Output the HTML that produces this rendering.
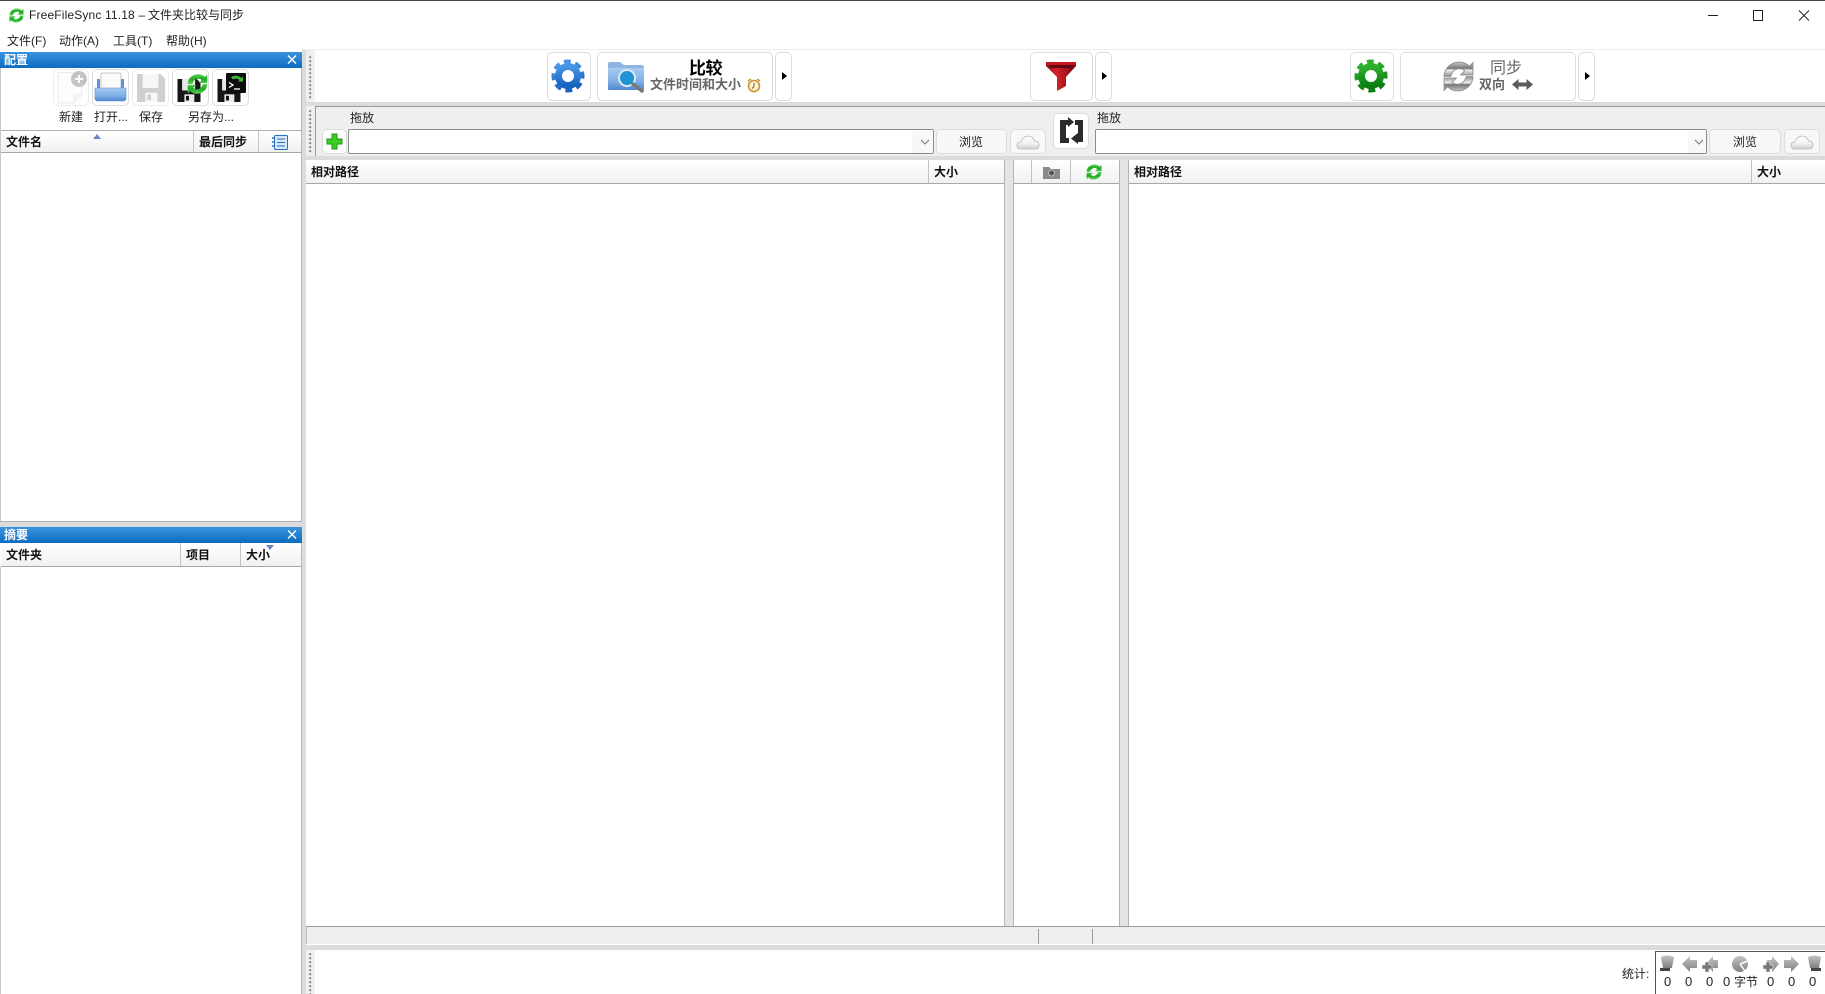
<!DOCTYPE html>
<html lang="zh"><head><meta charset="utf-8"><title>FreeFileSync 11.18</title>
<style>
html,body{margin:0;padding:0;width:1825px;height:994px;overflow:hidden;background:#fff}
body{position:relative;font:12px/16px "Liberation Sans","Noto Sans CJK SC",sans-serif;color:#222}
.a,.t,svg.i{position:absolute}
.t{white-space:nowrap;height:16px;line-height:16px}
.b{font-weight:700;color:#111}
.btn{position:absolute;box-sizing:border-box;border:1px solid #dcdcdc;border-radius:5px;background:#fff}
.cap{position:absolute;left:0;width:302px;height:16px;background:linear-gradient(#3b93de,#0b6cc0)}
.hdr{position:absolute;height:24px;box-sizing:border-box;background:linear-gradient(#fff,#f1f1f1);border-bottom:1px solid #a8a8a8}
.sep{position:absolute;width:1px;background:#c4c4c4}
.grip{position:absolute;width:3px;background-image:radial-gradient(circle at 1.2px 1.2px,#888 1px,transparent 1.2px);background-size:3px 4px}
.tri{position:absolute;width:0;height:0;border-style:solid;border-color:transparent}
</style></head><body>
<svg width="0" height="0" style="position:absolute"><defs>
<linearGradient id="gG" x1="0" y1="0" x2="0" y2="1"><stop offset="0" stop-color="#5fd35f"/><stop offset=".5" stop-color="#1ea81e"/><stop offset="1" stop-color="#5ccf5c"/></linearGradient>
<linearGradient id="gS" x1="0" y1="0" x2="0" y2="1"><stop offset="0" stop-color="#c9c9c9"/><stop offset=".45" stop-color="#757575"/><stop offset=".55" stop-color="#f0f0f0"/><stop offset="1" stop-color="#8c8c8c"/></linearGradient>
<linearGradient id="gA" x1="0" y1="0" x2="0" y2="1"><stop offset="0" stop-color="#c4c4c4"/><stop offset="1" stop-color="#808080"/></linearGradient>
<linearGradient id="gB" x1="0" y1="0" x2="0" y2="1"><stop offset="0" stop-color="#4a96e6"/><stop offset="1" stop-color="#1862c0"/></linearGradient>
<linearGradient id="gGr" x1="0" y1="0" x2="0" y2="1"><stop offset="0" stop-color="#2fb12f"/><stop offset="1" stop-color="#0b7d12"/></linearGradient>
<linearGradient id="gF" x1="0" y1="0" x2="0" y2="1"><stop offset="0" stop-color="#a7cbf3"/><stop offset=".6" stop-color="#7fb0e8"/><stop offset="1" stop-color="#4f87cf"/></linearGradient>
<linearGradient id="gR" x1="0" y1="0" x2="1" y2="0"><stop offset="0" stop-color="#8f0d14"/><stop offset=".35" stop-color="#d8222a"/><stop offset=".7" stop-color="#a5131a"/><stop offset="1" stop-color="#5f0a0e"/></linearGradient>
<linearGradient id="gC" x1="0" y1="0" x2="0" y2="1"><stop offset="0" stop-color="#fff"/><stop offset=".55" stop-color="#f3f3f3"/><stop offset="1" stop-color="#cfcfcf"/></linearGradient>
<symbol id="sync" viewBox="0 0 30 30"><path d="M1 15C1 7 8 1 16 1c4 0 7 1.500 9.500 4L29 1.500v12H17l4-4C19.500 8 18 7.500 16 7.500c-4 0-7 2.500-8.500 7.500z"/><path transform="rotate(180 15 15)" d="M1 15C1 7 8 1 16 1c4 0 7 1.500 9.500 4L29 1.500v12H17l4-4C19.500 8 18 7.500 16 7.500c-4 0-7 2.500-8.500 7.500z"/></symbol>
<symbol id="floppy" viewBox="0 0 30 30"><path d="M0 0h25l5 5v25H0z"/><rect x="6" y="0" width="17" height="15" fill="var(--w,#ddd)"/><rect x="9" y="20" width="13" height="10" fill="var(--w,#ddd)"/><rect x="11" y="22" width="4" height="6" fill="currentColor"/></symbol>
</defs></svg>

<!-- window top -->
<div class="a" style="left:0;top:0;width:1825px;height:1px;background:#4a4644"></div>
<svg class="i" style="left:9px;top:8px" width="15" height="15" fill="url(#gG)"><use href="#sync"/></svg>
<span class="t" style="left:29px;top:7px;letter-spacing:.15px">FreeFileSync 11.18 –</span>
<span class="t" style="left:148px;top:7px">文件夹比较与同步</span>
<svg class="i" style="left:1705px;top:8px" width="110" height="16" fill="none" stroke="#222" stroke-width="1"><path d="M3 7.500H13M48.500 2.500h9v10h-9zM94 2.500l10 10M104 2.500l-10 10"/></svg>
<span class="t" style="left:7px;top:33px">文件(F)</span>
<span class="t" style="left:59px;top:33px">动作(A)</span>
<span class="t" style="left:113px;top:33px">工具(T)</span>
<span class="t" style="left:166px;top:33px">帮助(H)</span>
<div class="a" style="left:302px;top:49px;width:1523px;height:1px;background:#eee"></div>

<!-- sash areas -->
<div class="a" style="left:302px;top:50px;width:4px;height:944px;background:#dcdcdc"></div>
<div class="a" style="left:306px;top:50px;width:9px;height:57px;background:#efefef"></div>
<div class="a" style="left:306px;top:102px;width:1519px;height:4px;background:#dcdcdc"></div>
<div class="a" style="left:315px;top:106px;width:1510px;height:1px;background:#9a9a9a"></div>
<div class="a" style="left:306px;top:106px;width:9px;height:1px;background:#efefef"></div>
<div class="a" style="left:306px;top:107px;width:1519px;height:49px;background:#efefef"></div>
<div class="a" style="left:306px;top:156px;width:1519px;height:4px;background:#dcdcdc"></div>
<div class="grip" style="left:309px;top:56px;height:44px"></div>
<div class="grip" style="left:309px;top:110px;height:44px"></div>
<div class="a" style="left:315px;top:106px;width:1px;height:50px;background:#9a9a9a"></div>

<!-- left: config pane -->
<div class="cap" style="top:52px"></div>
<span class="t b" style="left:4px;top:52px;color:#fff">配置</span>
<svg class="i" style="left:287px;top:55px" width="10" height="9" stroke="#fff" stroke-width="1.400"><path d="M1 .5l8 8M9 .5l-8 8"/></svg>
<div class="a" style="left:301px;top:68px;width:1px;height:453px;background:#b8b8b8"></div>
<div class="a" style="left:0;top:68px;width:1px;height:453px;background:#c8c8c8"></div>

<div class="btn" style="left:53px;top:69px;width:36px;height:37px;border-color:#ececec"></div>
<div class="btn" style="left:92px;top:69px;width:37px;height:37px"></div>
<div class="btn" style="left:132px;top:69px;width:37px;height:37px;border-color:#ececec"></div>
<div class="btn" style="left:172px;top:69px;width:37px;height:37px"></div>
<div class="btn" style="left:212px;top:69px;width:37px;height:37px"></div>
<!-- new -->
<svg class="i" style="left:56px;top:70px" width="32" height="35"><path d="M2 2.500h24v22l-8 8.500H2z" fill="#fdfdfd" stroke="#ececec"/><path d="M18 33v-8.500h8" fill="#f4f4f4" stroke="#ececec"/><circle cx="23" cy="9" r="8" fill="#c4c4c4"/><path d="M23 5v8M19 9h8" stroke="#fff" stroke-width="2"/></svg>
<!-- open -->
<svg class="i" style="left:94px;top:72px" width="33" height="31"><rect x="7" y="1" width="20" height="16" rx="1" fill="#fbfbfb" stroke="#c6c6c6"/><path d="M3 7h3v10H3zM27 7h3v10h-3z" fill="#5e95d8"/><path d="M1 16h31v10q0 3-3 3H4q-3 0-3-3z" fill="url(#gF)" stroke="#5e8fcf" stroke-width=".6"/></svg>
<!-- save -->
<svg class="i" style="left:137px;top:74px" width="28" height="28" fill="#cfcfcf" color="#cfcfcf"><use href="#floppy" style="--w:#f7f7f7"/></svg>
<!-- save as -->
<svg class="i" style="left:177px;top:79px" width="24" height="23" fill="#161616" color="#161616"><use href="#floppy" style="--w:#e8e8e8"/></svg>
<svg class="i" style="left:187px;top:73px" width="21" height="22" fill="url(#gG)"><use href="#sync"/></svg>
<!-- save as batch -->
<svg class="i" style="left:217px;top:79px" width="24" height="23" fill="#161616" color="#161616"><use href="#floppy" style="--w:#e8e8e8"/></svg>
<svg class="i" style="left:226px;top:73px" width="20" height="20"><rect width="20" height="20" rx="1" fill="#0d0d0d"/><path d="M5 4.500c3-3 8-2 10 .5l2-1.500v5h-5l1.500-1.500C12 5.500 9 5 7 6.500z" fill="#38b838"/><path d="M3 9.500l4 2.500-4 2.500" fill="none" stroke="#fff" stroke-width="1.300"/><path d="M8 16h6" stroke="#fff" stroke-width="1.300"/></svg>

<span class="t" style="left:59px;top:109px">新建</span>
<span class="t" style="left:94px;top:109px">打开...</span>
<span class="t" style="left:139px;top:109px">保存</span>
<span class="t" style="left:188px;top:109px">另存为...</span>

<div class="hdr" style="left:1px;top:130px;width:300px;height:23px;border-top:1px solid #b0b0b0"></div>
<div class="sep" style="left:193px;top:131px;height:21px"></div>
<div class="sep" style="left:258px;top:131px;height:21px"></div>
<span class="t b" style="left:6px;top:134px">文件名</span>
<div class="tri" style="left:93px;top:134px;border-width:0 4.500px 5px;border-bottom-color:#6f86c4"></div>
<span class="t b" style="left:199px;top:134px">最后同步</span>
<svg class="i" style="left:272px;top:135px" width="16" height="15"><rect x="2.500" y=".5" width="13" height="14" rx="1" fill="#d8e8fa" stroke="#2a70c0"/><path d="M5 4h8M5 7.500h8M5 11h8" stroke="#2a70c0"/><path d="M0 3h3M0 7h3M0 11h3" stroke="#2a70c0" stroke-width="1.500"/></svg>

<!-- left: summary pane -->
<div class="a" style="left:0;top:521px;width:302px;height:1px;background:#b0b0b0"></div>
<div class="a" style="left:0;top:522px;width:302px;height:5px;background:#dcdcdc"></div>
<div class="cap" style="top:527px"></div>
<span class="t b" style="left:4px;top:527px;color:#fff">摘要</span>
<svg class="i" style="left:287px;top:530px" width="10" height="9" stroke="#fff" stroke-width="1.400"><path d="M1 .5l8 8M9 .5l-8 8"/></svg>
<div class="hdr" style="left:1px;top:543px;width:300px"></div>
<div class="sep" style="left:180px;top:543px;height:23px"></div>
<div class="sep" style="left:240px;top:543px;height:23px"></div>
<span class="t b" style="left:6px;top:547px">文件夹</span>
<span class="t b" style="left:186px;top:547px">项目</span>
<span class="t b" style="left:246px;top:547px">大小</span>
<div class="tri" style="left:266px;top:545px;border-width:5px 4.500px 0;border-top-color:#6f86c4"></div>
<div class="a" style="left:301px;top:543px;width:1px;height:451px;background:#b8b8b8"></div>
<div class="a" style="left:0;top:567px;width:1px;height:427px;background:#c8c8c8"></div>

<!-- top toolbar -->
<div class="btn" style="left:547px;top:52px;width:44px;height:49px"></div>
<svg class="i" style="left:550px;top:58px" width="36" height="36" fill="none"><circle cx="18" cy="18" r="13.500" stroke="url(#gB)" stroke-width="6" stroke-dasharray="6.300 4.300" transform="rotate(-17 18 18)"/><circle cx="18" cy="18" r="9.500" stroke="url(#gB)" stroke-width="7"/><circle cx="18" cy="18" r="5.500" fill="#fff"/></svg>

<div class="btn" style="left:597px;top:52px;width:176px;height:49px"></div>
<svg class="i" style="left:607px;top:60px" width="40" height="34"><path d="M1 4q0-2 2-2h10l4 3h17q3 0 3 3v22H1z" fill="#8fb6e2"/><path d="M1 8h36v20q0 2-2 2H3q-2 0-2-2z" fill="url(#gF)"/><circle cx="20" cy="18" r="8" fill="#1f93d4" stroke="#dce9f5" stroke-width="2"/><path d="M26 24l9 7" stroke="#777" stroke-width="3.500" stroke-linecap="round"/></svg>
<span class="t b" style="left:689px;top:59px;font-size:17px;height:20px;line-height:20px;letter-spacing:-.5px;color:#000">比较</span>
<span class="t b" style="left:650px;top:77px;font-size:13px;color:#666">文件时间和大小</span>
<svg class="i" style="left:747px;top:78px" width="14" height="15"><circle cx="7" cy="8" r="5.500" fill="#fbf3d6" stroke="#c9962e" stroke-width="1.600"/><path d="M7 5v3.500L5 10.500" stroke="#8a5a10" fill="none"/><path d="M1 3l3-2M13 3l-3-2" stroke="#c9962e" stroke-width="1.500"/></svg>
<div class="btn" style="left:775px;top:52px;width:17px;height:49px"></div>
<div class="tri" style="left:782px;top:72px;border-width:4.500px 0 4.500px 5.500px;border-left-color:#000"></div>

<div class="btn" style="left:1030px;top:52px;width:63px;height:49px"></div>
<svg class="i" style="left:1045px;top:61px" width="33" height="32"><path d="M1 1h30v4L21 16v9l-9 5V16L1 5z" fill="url(#gR)"/><path d="M1 1h30v3H1z" fill="#c4161e"/><path d="M3 4h26l-3 3H6z" fill="#5f0a0e"/></svg>
<div class="btn" style="left:1095px;top:52px;width:17px;height:49px"></div>
<div class="tri" style="left:1102px;top:72px;border-width:4.500px 0 4.500px 5.500px;border-left-color:#000"></div>

<div class="btn" style="left:1350px;top:52px;width:44px;height:49px"></div>
<svg class="i" style="left:1353px;top:58px" width="36" height="36" fill="none"><circle cx="18" cy="18" r="13.500" stroke="url(#gGr)" stroke-width="6" stroke-dasharray="6.300 4.300" transform="rotate(-17 18 18)"/><circle cx="18" cy="18" r="9.500" stroke="url(#gGr)" stroke-width="7"/><circle cx="18" cy="18" r="5" fill="#fff"/></svg>

<div class="btn" style="left:1400px;top:52px;width:176px;height:49px"></div>
<svg class="i" style="left:1443px;top:61px" width="31" height="31" fill="url(#gS)" stroke="#8a8a8a" stroke-width=".8"><use href="#sync"/></svg>
<span class="t" style="left:1490px;top:59px;font-size:16px;height:20px;line-height:20px;color:#666">同步</span>
<span class="t b" style="left:1479px;top:77px;font-size:13px;color:#666">双向</span>
<svg class="i" style="left:1512px;top:78px" width="21" height="13" fill="#5a5a5a"><path d="M0 6.500L6.500 1v3.500h8V1L21 6.500 14.500 12V8.500h-8V12z"/></svg>
<div class="btn" style="left:1578px;top:52px;width:17px;height:49px"></div>
<div class="tri" style="left:1585px;top:72px;border-width:4.500px 0 4.500px 5.500px;border-left-color:#000"></div>

<!-- folder row -->
<span class="t" style="left:350px;top:110px">拖放</span>
<span class="t" style="left:1097px;top:110px">拖放</span>
<div class="btn" style="left:322px;top:129px;width:25px;height:25px"></div>
<svg class="i" style="left:326px;top:133px" width="17" height="17"><path d="M6 1h5v5h5v5h-5v5H6v-5H1V6h5z" fill="#3ccb24" stroke="#1b9a10"/></svg>
<div class="a" style="left:348px;top:129px;width:586px;height:25px;box-sizing:border-box;background:#fff;border:1px solid #8c8c8c;border-radius:2px"></div>
<div class="a" style="left:912px;top:130px;width:21px;height:23px;background:#f8f8f8"></div>
<svg class="i" style="left:920px;top:139px" width="10" height="6" fill="none" stroke="#777"><path d="M1 1l4 4 4-4"/></svg>
<div class="btn" style="left:936px;top:129px;width:71px;height:25px;background:#f8f8f8"></div>
<span class="t" style="left:959px;top:134px">浏览</span>
<div class="btn" style="left:1010px;top:129px;width:36px;height:25px;background:#f8f8f8"></div>
<svg class="i" style="left:1016px;top:134px" width="24" height="16"><path d="M5 15q-4 0-4-3.500T5 8q1-5 7-6 5 0 6.500 5 4.500 0 4.500 4t-4 4z" fill="url(#gC)" stroke="#c4c4c4"/></svg>

<div class="btn" style="left:1053px;top:113px;width:36px;height:36px"></div>
<svg class="i" style="left:1059px;top:116px" width="25" height="29" fill="#2b2b2b"><path d="M1 4h8V1l6 5-6 5V9H7v13h3v5H1z"/><path d="M16 4h8v22h-5v2l-7-5.500 7-5.500V9h-3z"/></svg>

<div class="a" style="left:1095px;top:129px;width:612px;height:25px;box-sizing:border-box;background:#fff;border:1px solid #8c8c8c;border-radius:2px"></div>
<div class="a" style="left:1688px;top:130px;width:18px;height:23px;background:#f8f8f8"></div>
<svg class="i" style="left:1694px;top:139px" width="10" height="6" fill="none" stroke="#777"><path d="M1 1l4 4 4-4"/></svg>
<div class="btn" style="left:1709px;top:129px;width:72px;height:25px;background:#f8f8f8"></div>
<span class="t" style="left:1733px;top:134px">浏览</span>
<div class="btn" style="left:1784px;top:129px;width:36px;height:25px;background:#f8f8f8"></div>
<svg class="i" style="left:1790px;top:134px" width="24" height="16"><path d="M5 15q-4 0-4-3.500T5 8q1-5 7-6 5 0 6.500 5 4.500 0 4.500 4t-4 4z" fill="url(#gC)" stroke="#c4c4c4"/></svg>

<!-- grids -->
<div class="hdr" style="left:306px;top:160px;width:698px"></div>
<div class="sep" style="left:928px;top:160px;height:23px"></div>
<span class="t b" style="left:311px;top:164px">相对路径</span>
<span class="t b" style="left:934px;top:164px">大小</span>
<div class="a" style="left:1004px;top:160px;width:10px;height:766px;background:#e4e4e4;border-left:1px solid #b4b4b4;border-right:1px solid #b4b4b4;box-sizing:border-box"></div>
<div class="hdr" style="left:1014px;top:160px;width:105px"></div>
<div class="sep" style="left:1031px;top:160px;height:23px"></div>
<div class="sep" style="left:1070px;top:160px;height:23px"></div>
<svg class="i" style="left:1043px;top:165px" width="17" height="14"><path d="M0 2h6l2 2h9v10H0z" fill="#8a8a8a"/><circle cx="8.500" cy="8" r="3" fill="#555" stroke="#bbb"/></svg>
<svg class="i" style="left:1086px;top:164px" width="16" height="16" fill="url(#gG)"><use href="#sync"/></svg>
<div class="a" style="left:1119px;top:160px;width:10px;height:766px;background:#e4e4e4;border-left:1px solid #b4b4b4;border-right:1px solid #b4b4b4;box-sizing:border-box"></div>
<div class="hdr" style="left:1129px;top:160px;width:696px"></div>
<div class="sep" style="left:1751px;top:160px;height:23px"></div>
<span class="t b" style="left:1134px;top:164px">相对路径</span>
<span class="t b" style="left:1757px;top:164px">大小</span>

<!-- status bar -->
<div class="a" style="left:306px;top:926px;width:1519px;height:1px;background:#9a9a9a"></div>
<div class="a" style="left:306px;top:927px;width:1519px;height:17px;background:#efefef;border-left:1px solid #bbb;box-sizing:border-box"></div>
<div class="sep" style="left:1038px;top:929px;height:15px;background:#999"></div>
<div class="sep" style="left:1092px;top:929px;height:15px;background:#999"></div>
<div class="a" style="left:306px;top:945px;width:1519px;height:5px;background:#dcdcdc"></div>
<div class="a" style="left:306px;top:950px;width:9px;height:44px;background:#efefef"></div>
<div class="grip" style="left:309px;top:953px;height:41px"></div>

<!-- stats -->
<span class="t" style="left:1622px;top:966px">统计:</span>
<div class="a" style="left:1655px;top:951px;width:170px;height:1px;background:#555"></div>
<div class="a" style="left:1655px;top:951px;width:1px;height:43px;background:#555"></div>
<svg class="i" style="left:1659px;top:955px" width="166" height="18">
<path d="M2 2q6-3 13 0l-2 11H4z" fill="url(#gA)"/><path d="M1 13h10v3H1z" fill="#444"/>
<path d="M23 9l8-8v4h7v8h-7v4z" fill="url(#gA)"/>
<path d="M47 9l7-8v4h5v8h-5v4z" fill="url(#gA)"/><path d="M43 10h3V7h4v3h3v4h-3v3h-4v-3h-3z" fill="#777" stroke="#eee" stroke-width=".6"/>
<circle cx="81" cy="9" r="8" fill="url(#gA)"/><path d="M81 9l8-3M81 9l5 7" stroke="#fff" stroke-width="1.500"/>
<path d="M120 9l-7-8v4h-5v8h5v4z" fill="url(#gA)"/><path d="M104 10h3V7h4v3h3v4h-3v3h-4v-3h-3z" fill="#777" stroke="#eee" stroke-width=".6"/>
<path d="M140 9l-8-8v4h-7v8h7v4z" fill="url(#gA)"/>
<path d="M149 2q6-3 13 0l-2 11h-9z" fill="url(#gA)"/><path d="M152 13h10v3h-10z" fill="#444"/></svg>
<span class="t" style="left:1664px;top:974px;font-size:13px">0</span>
<span class="t" style="left:1685px;top:974px;font-size:13px">0</span>
<span class="t" style="left:1706px;top:974px;font-size:13px">0</span>
<span class="t" style="left:1723px;top:974px;font-size:13px">0</span>
<span class="t" style="left:1734px;top:974px">字节</span>
<span class="t" style="left:1767px;top:974px;font-size:13px">0</span>
<span class="t" style="left:1788px;top:974px;font-size:13px">0</span>
<span class="t" style="left:1809px;top:974px;font-size:13px">0</span>
</body></html>
